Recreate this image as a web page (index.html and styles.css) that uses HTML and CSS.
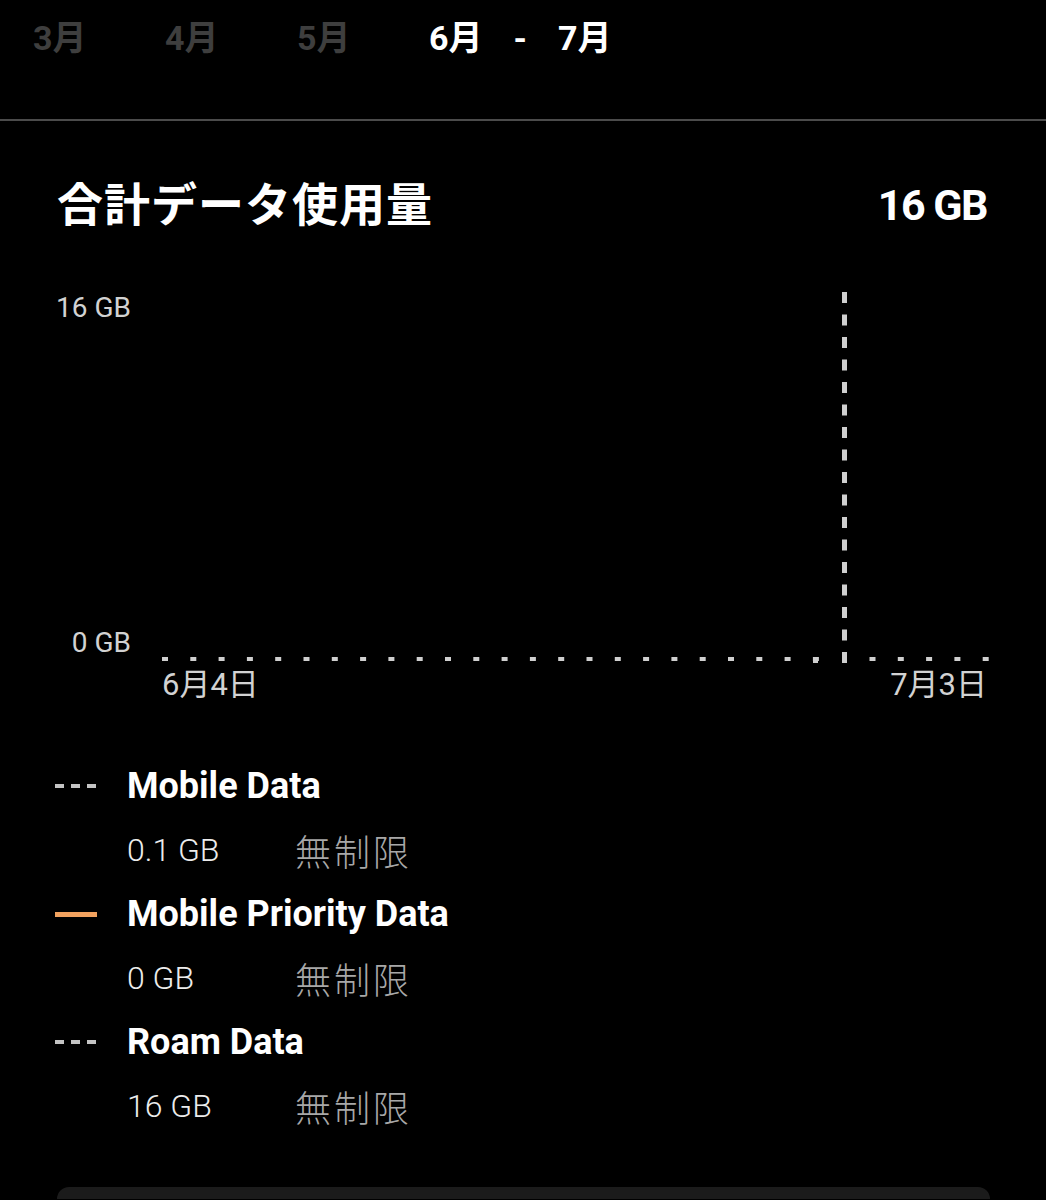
FILE: index.html
```html
<!DOCTYPE html>
<html lang="ja">
<head>
    <meta charset="UTF-8">
    <meta name="viewport" content="width=device-width, initial-scale=1.0">
    <title>データ使用量</title>
    <link rel="stylesheet" href="styles.css">
</head>
<body>
    <nav class="months">
        <span class="month">3月</span>
        <span class="month">4月</span>
        <span class="month">5月</span>
        <span class="range">
            <span>6月</span>
            <span>-</span>
            <span>7月</span>
        </span>
    </nav>

    <section class="summary">
        <h1>合計データ使用量</h1>
        <span class="total">16 GB</span>
    </section>

    <section class="chart">
        <div class="axis">
            <span>16 GB</span>
            <span>0 GB</span>
        </div>
        <svg class="plot" viewBox="0 0 828 375" width="828" height="375">
            <!-- base line, dotted -->
            <line x1="0" y1="369" x2="660" y2="369" stroke="#cfcfcf" stroke-width="4" stroke-dasharray="6 22.3"/>
            <line x1="651" y1="372" x2="656" y2="372" stroke="#cfcfcf" stroke-width="2"/>
            <line x1="707.5" y1="369" x2="828" y2="369" stroke="#cfcfcf" stroke-width="4" stroke-dasharray="6 22.3"/>
            <!-- today -->
            <line x1="682.5" y1="2" x2="682.5" y2="373" stroke="#cfcfcf" stroke-width="5" stroke-dasharray="11 11.5"/>
        </svg>
        <div class="dates">
            <span>6月4日</span>
            <span>7月3日</span>
        </div>
    </section>

    <section class="legend">
        <div class="row">
            <span class="key dashed"><i></i><i></i><i></i></span>
            <span class="name">Mobile Data</span>
        </div>
        <div class="row">
            <span class="key"></span>
            <span class="value">0.1 GB</span>
            <span class="limit">無制限</span>
        </div>
        <div class="row">
            <span class="key solid"><i></i></span>
            <span class="name">Mobile Priority Data</span>
        </div>
        <div class="row">
            <span class="key"></span>
            <span class="value">0 GB</span>
            <span class="limit">無制限</span>
        </div>
        <div class="row">
            <span class="key dashed"><i></i><i></i><i></i></span>
            <span class="name">Roam Data</span>
        </div>
        <div class="row">
            <span class="key"></span>
            <span class="value">16 GB</span>
            <span class="limit">無制限</span>
        </div>
    </section>

    <div class="card"></div>
</body>
</html>
```

FILE: styles.css
```css
body {
    margin: 0;
    padding: 0;
    background: #000;
    color: #fff;
    font-family: Roboto, "Noto Sans CJK JP", sans-serif;
    overflow: hidden;
}

.months {
    display: flex;
    align-items: flex-start;
    height: 121px;
    box-sizing: border-box;
    padding: 18px 0 0 33px;
    border-bottom: 2px solid #4b4b4b;
    font-size: 34px;
    line-height: 40px;
    font-weight: bold;
}

.month {
    width: 132px;
    color: #3e3e3e;
}

.range {
    display: flex;
    gap: 31px;
    color: #fff;
}

.summary {
    display: flex;
    justify-content: space-between;
    align-items: center;
    margin: 56px 59px 0 57px;
    height: 56px;
}

.summary h1 {
    margin: 0;
    font-size: 46px;
    line-height: 56px;
    letter-spacing: 1px;
    font-weight: bold;
}

.total {
    font-size: 43px;
    font-weight: bold;
    letter-spacing: -1.5px;
}

.chart {
    display: grid;
    grid-template-columns: 74px 828px;
    column-gap: 31px;
    margin: 57px 0 0 57px;
    color: #d2d2d2;
    font-size: 28px;
    line-height: 34px;
    white-space: nowrap;
}

.axis {
    display: flex;
    flex-direction: column;
    justify-content: space-between;
    align-items: flex-end;
    height: 370px;
    padding-top: 1px;
    box-sizing: border-box;
}

.plot {
    display: block;
}

.dates {
    grid-column: 2;
    display: flex;
    justify-content: space-between;
    padding-right: 3px;
    margin-top: 3px;
    font-size: 31px;
}

.legend {
    margin: 52px 0 0 55px;
}

.legend .row {
    display: flex;
    align-items: center;
    height: 64px;
    white-space: nowrap;
}

.key {
    display: flex;
    align-items: center;
    gap: 7px;
    width: 72px;
}

.dashed i {
    display: block;
    width: 9px;
    height: 4px;
    background: #c4c4c4;
}

.solid i {
    display: block;
    width: 42px;
    height: 5px;
    background: #f2a25f;
}

.name {
    font-size: 36px;
    font-weight: bold;
}

.value {
    width: 168px;
    font-size: 32px;
    font-weight: 300;
    color: #ececec;
}

.limit {
    font-size: 36px;
    font-weight: 300;
    letter-spacing: 3px;
    color: #a8a8a8;
}

.card {
    margin: 49px 56px 0 57px;
    height: 12px;
    background: #1b1b1b;
    border-radius: 16px 16px 0 0;
}
```
